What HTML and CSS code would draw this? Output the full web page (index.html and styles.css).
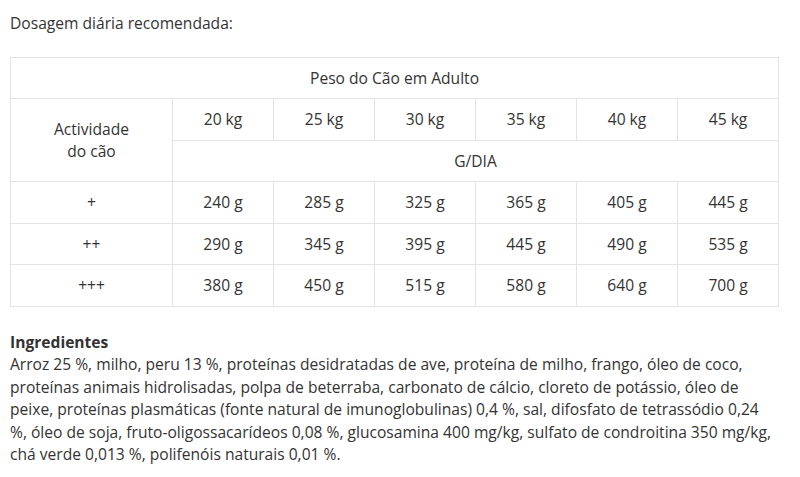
FILE: index.html
```html
<!DOCTYPE html>
<html lang="pt">
<head>
<meta charset="utf-8">
<link rel="stylesheet" href="styles.css">
</head>
<body>
<div class="page">
  <p class="intro">Dosagem diária recomendada:</p>
  <table class="dose">
    <colgroup>
      <col class="c-first">
      <col class="c-data"><col class="c-data"><col class="c-data">
      <col class="c-data"><col class="c-data"><col class="c-data">
    </colgroup>
    <tr><td colspan="7">Peso do Cão em Adulto</td></tr>
    <tr>
      <td rowspan="2">Actividade<br>do cão</td>
      <td>20 kg</td><td>25 kg</td><td>30 kg</td><td>35 kg</td><td>40 kg</td><td>45 kg</td>
    </tr>
    <tr><td colspan="6">G/DIA</td></tr>
    <tr><td>+</td><td>240 g</td><td>285 g</td><td>325 g</td><td>365 g</td><td>405 g</td><td>445 g</td></tr>
    <tr><td>++</td><td>290 g</td><td>345 g</td><td>395 g</td><td>445 g</td><td>490 g</td><td>535 g</td></tr>
    <tr><td>+++</td><td>380 g</td><td>450 g</td><td>515 g</td><td>580 g</td><td>640 g</td><td>700 g</td></tr>
  </table>
  <div class="ingredients">
    <strong class="ing-title">Ingredientes</strong>
    <p class="ing-text">Arroz 25 %, milho, peru 13 %, proteínas desidratadas de ave, proteína de milho, frango, óleo de coco, proteínas animais hidrolisadas, polpa de beterraba, carbonato de cálcio, cloreto de potássio, óleo de peixe, proteínas plasmáticas (fonte natural de imunoglobulinas) 0,4 %, sal, difosfato de tetrassódio 0,24 %, óleo de soja, fruto-oligossacarídeos 0,08 %, glucosamina 400 mg/kg, sulfato de condroitina 350 mg/kg, chá verde 0,013 %, polifenóis naturais 0,01 %.</p>
  </div>
</div>
</body>
</html>
```

FILE: styles.css
```css
html, body {
  margin: 0;
  padding: 0;
  background: #ffffff;
}
body {
  font-family: "Open Sans", "Liberation Sans", sans-serif;
  font-size: 15.6px;
  line-height: 22.5px;
  color: #333333;
}
.page {
  padding: 12px 10px 0 10px;
  width: 768px;
}
.intro {
  margin: 0 0 22px 0;
}
.dose {
  width: 768px;
  border-collapse: collapse;
  table-layout: fixed;
}
.c-first { width: 162px; }
.c-data { width: 101px; }
.dose td {
  border: 1px solid #e3e3e3;
  text-align: center;
  vertical-align: middle;
  padding: 9px 6px 9px 6px;
  height: 22.5px;
}
.ingredients {
  margin-top: 24px;
}
.ing-title {
  display: block;
  font-weight: 700;
}
.ing-text {
  margin: 0;
}
```
